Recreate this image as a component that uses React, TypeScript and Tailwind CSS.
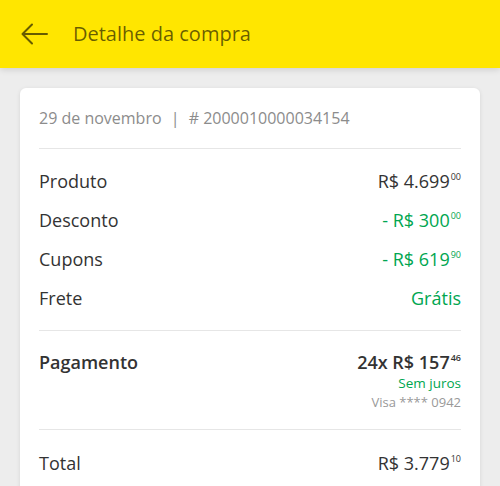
import React from "react";

function Price({ main, cents, className = "" }: { main: string; cents: string; className?: string }) {
  return (
    <span className={className}>
      {main}
      <sup className="ml-[1px] text-[9px] relative -top-[8px]">{cents}</sup>
    </span>
  );
}

export default function App() {
  const rows = [
    { label: "Produto", value: <Price main="R$ 4.699" cents="00" className="text-[#333]" /> },
    { label: "Desconto", value: <Price main="- R$ 300" cents="00" className="text-[#00a650]" /> },
    { label: "Cupons", value: <Price main="- R$ 619" cents="90" className="text-[#00a650]" /> },
    { label: "Frete", value: <span className="text-[#00a650]">Grátis</span> },
  ];

  return (
    <div className="min-h-[486px] w-full bg-[#ededed] font-['Open_Sans',sans-serif]">
      {/* Header */}
      <header className="relative z-10 flex h-[68px] items-center bg-[#ffe600] pl-[21px] shadow-[0_2px_6px_rgba(0,0,0,0.12)]">
        <svg width="27" height="22" viewBox="0 0 27 22" fill="none" className="text-black/60">
          <path d="M26 11H2M11 1.5L1.5 11L11 20.5" stroke="currentColor" strokeWidth="2" strokeLinecap="round" strokeLinejoin="round" />
        </svg>
        <h1 className="ml-[25px] text-[20px] text-black/60">Detalhe da compra</h1>
      </header>

      {/* Card */}
      <main className="px-5 pt-5">
        <div className="rounded-md bg-white px-[19px] shadow-[0_1px_4px_rgba(0,0,0,0.1)]">
          <div className="border-b border-[#e6e6e6] py-[19px] text-[16px] leading-[22px] text-[#8c8c8c]">
            29 de novembro <span className="mx-[5px]">|</span> # 2000010000034154
          </div>

          <div className="border-b border-[#e6e6e6] pb-[12px] pt-[13px] text-[18px]">
            {rows.map((r) => (
              <div key={r.label} className="flex h-[39px] items-center justify-between">
                <span className="text-[#333]">{r.label}</span>
                {r.value}
              </div>
            ))}
          </div>

          <div className="flex justify-between border-b border-[#e6e6e6] pb-[18px] pt-[20px]">
            <span className="text-[18px] font-semibold leading-[22px] text-[#333]">Pagamento</span>
            <div className="flex flex-col items-end">
              <Price main="24x R$ 157" cents="46" className="text-[18px] font-semibold leading-[22px] text-[#333]" />
              <span className="text-[13.5px] leading-[20px] text-[#00a650]">Sem juros</span>
              <span className="text-[13px] leading-[18px] text-[#999]">Visa **** 0942</span>
            </div>
          </div>

          <div className="flex items-center justify-between pb-[20px] pt-[22px] text-[18px] leading-[22px]">
            <span className="text-[#333]">Total</span>
            <Price main="R$ 3.779" cents="10" className="text-[#333]" />
          </div>
        </div>
      </main>
    </div>
  );
}
